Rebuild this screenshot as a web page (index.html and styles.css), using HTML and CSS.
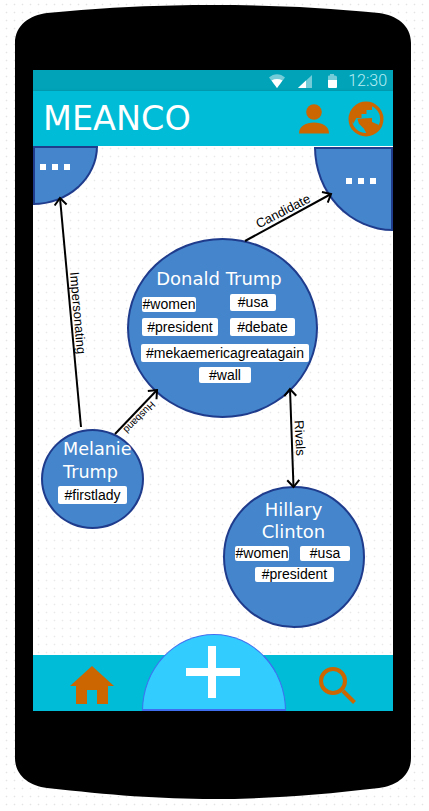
FILE: index.html
```html
<!DOCTYPE html>
<html lang="en">
<head>
<meta charset="utf-8">
<title>MEANCO</title>
<link rel="stylesheet" href="styles.css">
</head>
<body>
<div class="phone">
  <svg class="phone-shell" viewBox="0 0 396 794" aria-hidden="true"><path d="M0 38C0 20 15 10 32 8C95 2 145 0 198 0C251 0 305 2 364 8C381 10 396 20 396 38L396 753C396 771 381 781 364 783C305 790 251 794 198 794C145 794 95 790 32 783C15 781 0 771 0 753Z"/></svg>
  <div class="screen">
    <div class="status-bar">
      <svg class="status-icons" viewBox="0 0 68 14" aria-hidden="true">
        <path class="dim" d="M0 3.500C4.500 -1 11.500 -1 16 3.500L8 14Z"/>
        <path class="lit" d="M2.500 6.500C6 4.600 10 4.600 13.500 6.500L8 14Z"/>
        <path class="dim" d="M29 14L43 1V14Z"/>
        <path class="lit" d="M29 14L37 6.600V14Z"/>
        <path class="dim" d="M59 6V2.500Q59 1.500 60 1.500H61V0H65V1.500H66Q68 1.500 68 3V6Z"/>
        <path class="lit" d="M59 6H68V13Q68 14 67 14H60Q59 14 59 13Z"/>
      </svg>
      <span class="clock">12:30</span>
    </div>
    <header class="app-bar">
      <h1 class="app-title">MEANCO</h1>
      <svg class="icon-person" viewBox="0 0 30 30" aria-hidden="true"><circle cx="15" cy="8" r="7.800"/><path d="M0 29.500C0 22 7 18.500 15 18.500C23 18.500 30 22 30 29.500Z"/></svg>
      <svg class="icon-globe" viewBox="0 0 36 36" aria-hidden="true">
        <circle class="globe-ring" cx="18" cy="18" r="15.800"/>
        <path d="M24 3V9H18.500V13H13.500V17H8.500L5 23L2 14L8 5L16 2Z"/>
        <path d="M9.300 17.700L24 17V21L31 24L27.700 31L19.300 34L16 27.700L11 22.700Z"/>
      </svg>
    </header>
    <main class="canvas">
      <div class="corner corner-left"><span class="more"><i></i><i></i><i></i></span></div>
      <div class="corner corner-right"><span class="more"><i></i><i></i><i></i></span></div>

      <section class="node node-donald">
        <h2 class="node-name">Donald Trump</h2>
        <div class="tags tags-d1"><span class="tag tag-dwomen">#women</span><span class="tag tag-dusa">#usa</span></div>
        <div class="tags tags-d2"><span class="tag tag-dpres">#president</span><span class="tag tag-ddebate">#debate</span></div>
        <div class="tags tags-d3"><span class="tag tag-dmek">#mekaemericagreatagain</span></div>
        <div class="tags tags-d4"><span class="tag tag-dwall">#wall</span></div>
      </section>

      <section class="node node-melanie">
        <h2 class="node-name">Melanie<br>Trump</h2>
        <div class="tags tags-m1"><span class="tag tag-mfirst">#firstlady</span></div>
      </section>

      <section class="node node-hillary">
        <h2 class="node-name">Hillary<br>Clinton</h2>
        <div class="tags tags-h1"><span class="tag tag-hwomen">#women</span><span class="tag tag-husa">#usa</span></div>
        <div class="tags tags-h2"><span class="tag tag-hpres">#president</span></div>
      </section>

      <svg class="edges" viewBox="0 0 360 509">
        <defs>
          <marker id="head" viewBox="0 0 14 14" refX="11" refY="7" markerWidth="14" markerHeight="14" markerUnits="userSpaceOnUse" orient="auto-start-reverse"><path class="head" d="M4 1L11 7L4 13"/></marker>
        </defs>
        <line class="edge" marker-end="url(#head)" x1="48" y1="281" x2="27" y2="52"/>
        <line class="edge" marker-end="url(#head)" x1="212" y1="95" x2="298" y2="48"/>
        <line class="edge" marker-end="url(#head)" x1="82" y1="288" x2="124" y2="244"/>
        <line class="edge" marker-start="url(#head)" marker-end="url(#head)" x1="257" y1="243" x2="260.500" y2="341"/>
        <text class="edge-label" transform="translate(45 167) rotate(85)">Impersonating</text>
        <text class="edge-label" transform="translate(250 65) rotate(-27)">Candidate</text>
        <text class="edge-label edge-label-small" transform="translate(106.500 271.500) rotate(135)">Husband</text>
        <text class="edge-label" transform="translate(267 292) rotate(87)">Rivals</text>
      </svg>
    </main>
    <nav class="bottom-nav">
      <svg class="icon-home" viewBox="0 0 44 38" aria-hidden="true"><path d="M22 0L44 20H38V38H27V24H17V38H6V20H0Z"/></svg>
      <div class="fab"><svg class="fab-plus" viewBox="0 0 54 52" aria-hidden="true"><path d="M22 0H30V22H54V30H30V52H22V30H0V22H22Z"/></svg></div>
      <svg class="icon-search" viewBox="0 0 37 37" aria-hidden="true"><circle cx="14" cy="14" r="12"/><line x1="24" y1="24" x2="35.500" y2="35.500"/></svg>
    </nav>
  </div>
</div>
</body>
</html>
```
FILE: styles.css
```css
* { box-sizing: border-box; }
html, body { height: 100%; }
body {
  margin: 0;
  overflow: hidden;
  background-color: #fff;
  background-image: radial-gradient(circle at 6.5px 4.5px, #e4e4e4 0.7px, transparent 1.1px);
  background-size: 8px 8px;
  background-attachment: fixed;
}
.phone {
  position: relative;
  width: 396px;
  height: 794px;
  margin: 5px 0 0 15px;
  padding: 65px 18px 0;
}
.phone-shell { position: absolute; inset: 0; width: 396px; height: 794px; fill: #000; }
.screen { position: relative; display: flex; flex-direction: column; width: 360px; height: 641px; }
.status-bar {
  display: flex;
  align-items: center;
  justify-content: flex-end;
  height: 21px;
  padding-right: 6px;
  background: #00a3b8;
}
.status-icons { width: 68px; height: 14px; margin-right: 11px; }
.dim { fill: #fff; opacity: 0.45; }
.lit { fill: #fff; }
.clock { font: 300 16px/21px Roboto, sans-serif; color: #b9eef5; }
.app-bar {
  position: relative;
  display: flex;
  align-items: center;
  height: 55px;
  padding: 0 9px 0 10px;
  background: #00bcd6;
  box-shadow: 0 1px 3px rgba(0, 0, 0, 0.35);
}
.app-title { margin: 0 auto 0 0; font: 400 33.500px/40px "DejaVu Sans", sans-serif; color: #fff; }
.icon-person { width: 30px; height: 30px; margin-right: 19px; fill: #cc6600; }
.icon-globe { width: 36px; height: 36px; fill: #cc6600; }
.globe-ring { fill: none; stroke: #cc6600; stroke-width: 3.400; }
.canvas {
  position: relative;
  flex: 1;
  overflow: hidden;
  background-color: #fff;
  background-image: radial-gradient(circle at 6.5px 4.5px, #e9e9e9 0.7px, transparent 1.1px);
  background-size: 8px 8px;
  background-attachment: fixed;
}
.corner {
  position: absolute;
  background: #4485cb;
  border: 2px solid #1f3b8c;
}
.corner-left { left: 0; top: 0; width: 65px; height: 59px; padding: 16px 0 0 5px; border-bottom-right-radius: 100%; }
.corner-right { left: 281px; top: 1px; width: 79px; height: 84px; padding: 29px 0 0 30px; border-bottom-left-radius: 100%; }
.more { display: flex; gap: 6px; }
.more i { width: 6px; height: 6px; background: #fff; }
.node {
  position: absolute;
  background: #4485cb;
  border: 2px solid #1f3b8c;
  border-radius: 50%;
}
.node-name { margin: 0; font: 400 18px/24px "DejaVu Sans", sans-serif; color: #fff; text-align: center; }
.tags { display: flex; align-items: flex-start; }
.tag {
  flex: none;
  font: 400 14px/16px "Liberation Sans", sans-serif;
  color: #000;
  text-align: center;
  background: #fff;
  border-radius: 2px;
}

.node-donald { left: 94px; top: 92px; width: 191px; height: 180px; padding: 27px 0 0 13px; }
.node-donald .node-name { margin: 0 0 3px -20px; }
.tags-d1 { height: 24px; }
.tag-dwomen { width: 54px; height: 15px; margin-top: 3px; line-height: 15px; }
.tag-dusa { width: 46px; height: 17px; margin-left: 34px; }
.tag-dpres { width: 76px; height: 18px; line-height: 18px; }
.tag-ddebate { width: 65px; height: 18px; margin-left: 12px; line-height: 18px; }
.tags-d2 { height: 26px; }
.tags-d3 { height: 23px; margin-left: -1px; }
.tag-dmek { width: 168px; height: 18px; line-height: 18px; }
.tag-dwall { width: 52px; height: 16px; margin-left: 57px; }

.node-melanie { left: 8px; top: 283px; width: 103px; height: 100px; padding: 7px 0 0 15px; }
.node-melanie .node-name { margin: 0 0 3px 5px; font-size: 17.600px; line-height: 22.500px; text-align: left; }
.tag-mfirst { width: 69px; height: 18px; line-height: 18px; }

.node-hillary { left: 190px; top: 340px; width: 142px; height: 142px; padding: 11px 0 0 10px; }
.node-hillary .node-name { margin: 0 0 4px -11px; line-height: 21.500px; }
.tags-h1 { height: 21px; }
.tag-hwomen { width: 54px; height: 15px; line-height: 15px; }
.tag-husa { width: 50px; height: 15px; margin-left: 11px; line-height: 15px; }
.tag-hpres { width: 79px; height: 15px; margin-left: 20px; line-height: 15px; }

.edges { position: absolute; inset: 0; width: 360px; height: 509px; }
.edge { stroke: #000; stroke-width: 2; }
.head { fill: none; stroke: #000; stroke-width: 2; }
.edge-label {
  font: 400 13px "Liberation Sans", sans-serif;
  fill: #000;
  text-anchor: middle;
  dominant-baseline: central;
}
.edge-label-small { font-size: 10px; }
.bottom-nav {
  position: relative;
  display: flex;
  align-items: flex-end;
  justify-content: space-between;
  height: 56px;
  padding: 0 37px 7px;
  background: #00bcd6;
}
.icon-home { width: 44px; height: 38px; fill: #cc6600; }
.icon-search { width: 37px; height: 37px; fill: none; stroke: #cc6600; stroke-width: 4; }
.fab {
  position: absolute;
  left: 109px;
  bottom: 0;
  display: flex;
  justify-content: center;
  width: 144px;
  height: 77px;
  padding-top: 11px;
  background: #33ccff;
  border: 1px solid #3f6ff0;
  border-bottom-width: 2px;
  border-radius: 72px 72px 0 0 / 77px 77px 0 0;
}
.fab-plus { width: 54px; height: 52px; margin-left: -3px; fill: #fff; }
```
